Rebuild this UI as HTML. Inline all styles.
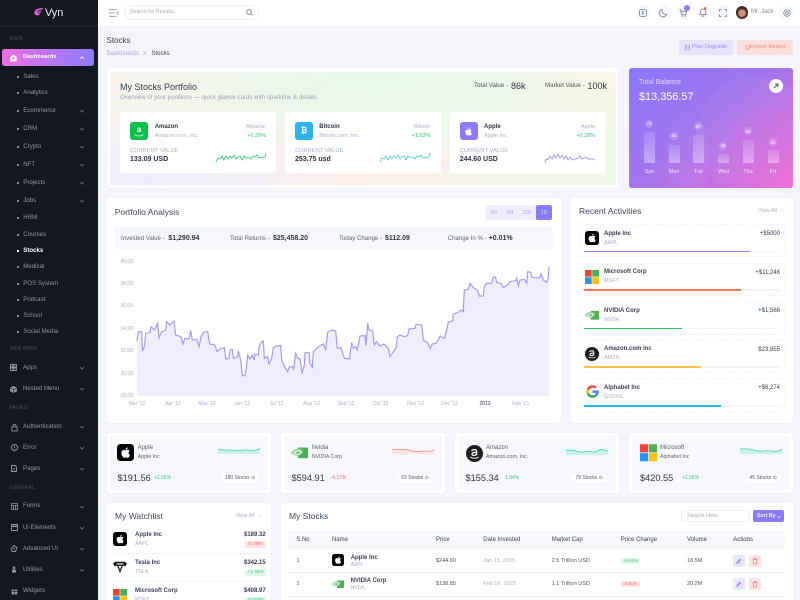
<!DOCTYPE html>
<html lang="en"><head><meta charset="utf-8"><title>Vyn Stocks</title>
<style>
*{box-sizing:border-box;margin:0;padding:0}
html,body{width:800px;height:600px;overflow:hidden;background:#f4f5fa;font-family:"Liberation Sans",sans-serif}
#r{position:relative;width:800px;height:600px;overflow:hidden}
.b{position:absolute}
.t{position:absolute;white-space:nowrap;line-height:10px;height:10px;font-size:6px;color:#3a4152;margin-top:.8px}
.r{text-align:right}
.c{text-align:center}
.card{position:absolute;background:#fff;border-radius:3px;box-shadow:0 0 2px rgba(80,90,130,.05)}
.s{color:#9299a5;font-size:6.1px}
.h{color:#4d525c;font-size:5px;letter-spacing:.2px}
.g{color:#34c77b}
.m{color:#a9afc4}
.d{color:#2b3140}
.ti{font-size:8.5px;color:#3f4656}
.p{font-size:9.2px;color:#2f3542}
.bar{position:absolute;background:linear-gradient(rgba(255,255,255,.12),rgba(255,255,255,.38))}
.bub{position:absolute;width:8px;height:8px;border-radius:50%;background:rgba(255,255,255,.18)}
svg{position:absolute;overflow:visible}
.lg{position:absolute;border-radius:3px}
</style></head><body><div id="r">
<svg width="0" height="0" style="position:absolute">
<defs>
<symbol id="apple" viewBox="0 0 24 24"><rect width="24" height="24" rx="5" fill="#000"/><path d="M16.2 12.6c0-1.9 1.5-2.7 1.6-2.8-.9-1.3-2.2-1.5-2.7-1.500-1.2-.1-2.2.7-2.8.7s-1.500-.7-2.400-.7c-1.300 0-2.400.7-3.100 1.800-1.300 2.300-.3 5.600 1 7.500.6.900 1.400 1.900 2.400 1.900.9 0 1.300-.6 2.400-.6s1.500.6 2.400.6c1 0 1.700-.9 2.300-1.900.7-1.100 1-2.100 1-2.200-.1 0-2.100-.8-2.100-2.800zM14.400 7.100c.5-.6.9-1.500.8-2.400-.8 0-1.700.5-2.200 1.200-.5.6-.9 1.400-.8 2.300.9.100 1.700-.4 2.200-1.100z" fill="#fff"/></symbol>
<symbol id="ms" viewBox="0 0 24 24"><rect x="0" y="0" width="11.500" height="11.500" fill="#f44336"/><rect x="12.500" y="0" width="11.500" height="11.500" fill="#4caf50"/><rect x="0" y="12.500" width="11.500" height="11.500" fill="#2196f3"/><rect x="12.500" y="12.500" width="11.500" height="11.500" fill="#ffc107"/></symbol>
<symbol id="nv" viewBox="0 0 24 24"><path d="M10 5h14v15H10z" fill="#4caf50"/><path d="M0 12.500C3 8.500 7 6.500 11 6.500c3 0 5 2 6.500 4-1.500 2.500-4 5.500-7.500 6-4 .5-7.500-1.500-10-4z" fill="#8fd093"/><path d="M3 12.500C5 10 8 8.800 10.500 8.800c2.500 0 3.800 1.500 4.500 3-1 1.800-3 3.500-5 3.700-2.500.2-5-1-7-3z" fill="#e3f3e3"/><path d="M6 12.500c1.500-1.500 3-2 4.500-2 1.300 0 2 .7 2.500 1.500-.7 1-1.800 1.800-3 1.900-1.500.1-3-.3-4-1.400z" fill="#6dbf71"/></symbol>
<symbol id="am" viewBox="0 0 24 24"><circle cx="12" cy="12" r="12" fill="#1f1f1f"/><path d="M8 8.500c.5-1.500 2-2 3.500-2 2 0 3.500.8 3.500 3v5M15 10.500c-3-.3-6.500.2-6.500 2.500 0 2.400 4.500 2.300 6.500-.3" fill="none" stroke="#fff" stroke-width="1.700"/><path d="M6 17c3.500 2.300 8.500 2.300 12 0" fill="none" stroke="#fff" stroke-width="1.300"/></symbol>
<symbol id="goo" viewBox="0 0 24 24"><path d="M12 4.800c1.900 0 3.300.7 4.500 1.800l3.200-3.200C17.600 1.500 15 .5 12 .5 7.500.5 3.600 3.100 1.700 6.800l3.800 3C6.400 7 9 4.800 12 4.800z" fill="#ea4335"/><path d="M23.500 12.300c0-.8-.1-1.600-.2-2.300H12v4.500h6.500c-.3 1.500-1.100 2.700-2.400 3.500l3.700 2.900c2.200-2 3.700-5 3.700-8.600z" fill="#4285f4"/><path d="M5.500 14.200c-.2-.7-.4-1.400-.4-2.200s.1-1.500.4-2.200l-3.800-3C.9 8.400.5 10.100.5 12s.4 3.600 1.200 5.200l3.800-3z" fill="#fbbc05"/><path d="M12 23.500c3.100 0 5.700-1 7.800-2.800L16.100 18c-1 .7-2.400 1.100-4.100 1.100-3 0-5.600-2-6.500-4.900l-3.800 3c1.900 3.700 5.800 6.300 10.300 6.300z" fill="#34a853"/></symbol>
<symbol id="tsla" viewBox="0 0 24 24"><path d="M0 6l4-3h16l4 3-3 5-4-1.500L12 23 7 9.500 3 11z" fill="#111"/><path d="M5 5.800h14l-3 2H8z" fill="#fff"/><path d="M9.500 10h5L12 17z" fill="#fff"/></symbol>
<symbol id="chev" viewBox="0 0 8 8"><path d="M2 3.200l2 2 2-2" fill="none" stroke="#6e737d" stroke-width=".8"/></symbol>
</defs>
</svg>

<!-- SIDEBAR -->
<div class="b" style="left:0;top:0;width:98px;height:600px;background:#13171f"></div>
<div class="b" style="left:0;top:26px;width:98px;height:1px;background:#1f232c"></div>
<svg style="left:32.500px;top:7.300px" width="11" height="9.500" viewBox="0 0 14 11"><path d="M3 3.500C5 1.500 9 1 13.500.5 12 2.500 9.500 3.500 6 4 5 4.200 4 4.800 3.800 5.500 6 5 9 4.800 11.500 4.500 10.500 6 8.500 6.800 5.500 7c.5.800 2.500.9 4 .7-1 1.500-3 2.600-5 2.300C2 9.500.5 6.500 3 3.500z" fill="#ee5fe0"/></svg>
<div class="t" style="left:45px;top:7px;font-size:10.800px;line-height:11px;height:11px;color:#f1f2f5">Vyn</div>
<div class="t h" style="left:9.500px;top:33px">MAIN</div>
<div class="b" style="left:2px;top:49px;width:91.500px;height:17px;border-radius:2.500px;background:linear-gradient(100deg,#ef6fe0,#8a7cff)"></div>
<svg style="left:10px;top:53.500px" width="7" height="8" viewBox="0 0 7 8"><path d="M3.500.5L6.700 3v4.500H.3V3z" fill="#fff"/><circle cx="3.500" cy="4.300" r="1.200" fill="#e07ae6"/></svg>
<div class="t" style="left:23px;top:51.500px;color:#fff;font-weight:700;font-size:5.800px">Dashboards</div>
<svg style="left:78px;top:53.500px" width="8" height="8" viewBox="0 0 8 8"><path d="M2 4.800L4 2.800 6 4.800" fill="none" stroke="#fff" stroke-width=".8"/></svg>

<div class="b" style="left:17px;top:75.500px;width:2px;height:2px;background:#8c919b"></div><div class="t s" style="left:23.300px;top:71px">Sales</div>
<div class="b" style="left:17px;top:92px;width:2px;height:2px;background:#8c919b"></div><div class="t s" style="left:23.300px;top:87.500px">Analytics</div>
<div class="b" style="left:17px;top:110px;width:2px;height:2px;background:#8c919b"></div><div class="t s" style="left:23.300px;top:105.500px">Ecommerce</div><svg style="left:78px;top:107px" width="8" height="8"><use href="#chev"/></svg>
<div class="b" style="left:17px;top:128px;width:2px;height:2px;background:#8c919b"></div><div class="t s" style="left:23.300px;top:123.500px">CRM</div><svg style="left:78px;top:125px" width="8" height="8"><use href="#chev"/></svg>
<div class="b" style="left:17px;top:145.500px;width:2px;height:2px;background:#8c919b"></div><div class="t s" style="left:23.300px;top:141px">Crypto</div><svg style="left:78px;top:142.500px" width="8" height="8"><use href="#chev"/></svg>
<div class="b" style="left:17px;top:163.500px;width:2px;height:2px;background:#8c919b"></div><div class="t s" style="left:23.300px;top:159px">NFT</div><svg style="left:78px;top:160.500px" width="8" height="8"><use href="#chev"/></svg>
<div class="b" style="left:17px;top:181.500px;width:2px;height:2px;background:#8c919b"></div><div class="t s" style="left:23.300px;top:177px">Projects</div><svg style="left:78px;top:178.500px" width="8" height="8"><use href="#chev"/></svg>
<div class="b" style="left:17px;top:199.500px;width:2px;height:2px;background:#8c919b"></div><div class="t s" style="left:23.300px;top:195px">Jobs</div><svg style="left:78px;top:196.500px" width="8" height="8"><use href="#chev"/></svg>
<div class="b" style="left:17px;top:217px;width:2px;height:2px;background:#8c919b"></div><div class="t s" style="left:23.300px;top:212.500px">HRM</div>
<div class="b" style="left:17px;top:233.500px;width:2px;height:2px;background:#8c919b"></div><div class="t s" style="left:23.300px;top:229px">Courses</div>
<div class="b" style="left:17px;top:249.500px;width:2px;height:2px;background:#fff"></div><div class="t s" style="left:23.300px;top:245px;color:#fff;font-weight:700">Stocks</div>
<div class="b" style="left:17px;top:266px;width:2px;height:2px;background:#8c919b"></div><div class="t s" style="left:23.300px;top:261.500px">Medical</div>
<div class="b" style="left:17px;top:282.500px;width:2px;height:2px;background:#8c919b"></div><div class="t s" style="left:23.300px;top:278px">POS System</div>
<div class="b" style="left:17px;top:298.500px;width:2px;height:2px;background:#8c919b"></div><div class="t s" style="left:23.300px;top:294px">Podcast</div>
<div class="b" style="left:17px;top:315px;width:2px;height:2px;background:#8c919b"></div><div class="t s" style="left:23.300px;top:310px">School</div>
<div class="b" style="left:17px;top:331px;width:2px;height:2px;background:#8c919b"></div><div class="t s" style="left:23.300px;top:326.500px">Social Media</div>

<div class="t h" style="left:9.500px;top:343px">WEB APPS</div>
<svg style="left:10px;top:364px" width="7" height="7" viewBox="0 0 7 7"><path d="M.5.500h2.500v2.500H.5zM4 .5h2.500v2.500H4zM.5 4h2.500v2.500H.5zM4 4h2.500v2.500H4z" fill="none" stroke="#8f949e" stroke-width=".9"/></svg>
<div class="t s" style="left:23px;top:362px">Apps</div><svg style="left:78px;top:364px" width="8" height="8"><use href="#chev"/></svg>
<svg style="left:10px;top:385.500px" width="7" height="7" viewBox="0 0 7 7"><path d="M3.500 0L7 1.800v3.400L3.500 7 0 5.200V1.800z" fill="#9298a2"/><path d="M0 2l3.500 1.800L7 2M3.500 3.800V7" stroke="#13171f" stroke-width=".6" fill="none"/></svg>
<div class="t s" style="left:23px;top:383.500px">Nested Menu</div><svg style="left:78px;top:385px" width="8" height="8"><use href="#chev"/></svg>

<div class="t h" style="left:9.500px;top:402.500px">PAGES</div>
<svg style="left:10.500px;top:423.500px" width="7" height="7.500" viewBox="0 0 7 8"><rect x=".7" y="3" width="5.600" height="4.500" fill="none" stroke="#9298a2" stroke-width=".9"/><path d="M2 3V1.800a1.500 1.500 0 013 0V3" fill="none" stroke="#9298a2" stroke-width=".9"/></svg>
<div class="t s" style="left:23px;top:421.500px">Authentication</div><svg style="left:78px;top:423px" width="8" height="8"><use href="#chev"/></svg>
<svg style="left:10.500px;top:444px" width="7" height="7" viewBox="0 0 7 7"><circle cx="3.500" cy="3.500" r="3" fill="none" stroke="#9298a2" stroke-width=".9"/><path d="M3.500 1.800v2.200M3.500 4.700v.6" stroke="#9298a2" stroke-width=".8"/></svg>
<div class="t s" style="left:23px;top:442px">Error</div><svg style="left:78px;top:444px" width="8" height="8"><use href="#chev"/></svg>
<svg style="left:11px;top:465px" width="6" height="7" viewBox="0 0 6 7"><path d="M.5.500h3.500L5.500 2v4.500h-5z" fill="none" stroke="#9298a2" stroke-width=".9"/><path d="M1.700 3.500h2.500M1.700 5h2.500" stroke="#9298a2" stroke-width=".6"/></svg>
<div class="t s" style="left:23px;top:463px">Pages</div><svg style="left:78px;top:465px" width="8" height="8"><use href="#chev"/></svg>

<div class="t h" style="left:9.500px;top:482.500px">GENERAL</div>
<svg style="left:10.500px;top:502.500px" width="7" height="7" viewBox="0 0 7 7"><path d="M.5.500h6v6h-6zM.5 2.500h6M2.500 2.500v4M4.500 2.500v4" fill="none" stroke="#9298a2" stroke-width=".8"/></svg>
<div class="t s" style="left:23px;top:500.500px">Forms</div><svg style="left:78px;top:502.500px" width="8" height="8"><use href="#chev"/></svg>
<svg style="left:10.500px;top:524px" width="7" height="7" viewBox="0 0 7 7"><path d="M.5.500h6v6h-6z" fill="none" stroke="#9298a2" stroke-width=".9"/><path d="M.5 2.300h6" stroke="#9298a2" stroke-width="1.400"/></svg>
<div class="t s" style="left:23px;top:522px">Ui Elements</div><svg style="left:78px;top:524px" width="8" height="8"><use href="#chev"/></svg>
<svg style="left:10.500px;top:545px" width="7" height="7" viewBox="0 0 7 7"><path d="M3 .5l3 2-1.500 4H1L.5 3.500z" fill="none" stroke="#9298a2" stroke-width=".9"/><circle cx="3.200" cy="3.500" r=".9" fill="#9298a2"/></svg>
<div class="t s" style="left:23px;top:543px">Advanced UI</div><svg style="left:78px;top:545px" width="8" height="8"><use href="#chev"/></svg>
<svg style="left:11px;top:566px" width="6" height="7" viewBox="0 0 6 7"><circle cx="3" cy="1.700" r="1.300" fill="#9298a2"/><rect x="1" y="3.500" width="4" height="3.300" rx="1" fill="#9298a2"/></svg>
<div class="t s" style="left:23px;top:564px">Utilities</div><svg style="left:78px;top:566px" width="8" height="8"><use href="#chev"/></svg>
<svg style="left:10.500px;top:587.500px" width="7" height="7" viewBox="0 0 7 7"><rect x=".5" y="1.500" width="6" height="5" rx="1" fill="#9298a2"/><path d="M.5 3.700h6M3.500 1v6" stroke="#13171f" stroke-width=".6"/></svg>
<div class="t s" style="left:23px;top:585.500px">Widgets</div>

<!-- HEADER -->
<div class="b" style="left:98px;top:0;width:702px;height:26px;background:#fff"></div>
<svg style="left:109px;top:8.500px" width="10" height="8" viewBox="0 0 10 8"><path d="M0 .7h7.500M0 4h5.500M0 7.300h7.500M9.500 2L7.800 4l1.700 2" fill="none" stroke="#8a8f9b" stroke-width=".8"/></svg>
<div class="b" style="left:124px;top:4.500px;width:134.500px;height:15px;border:.7px solid #eceef3;border-radius:8px"></div>
<div class="t" style="left:130px;top:6.500px;color:#a8adb8;font-size:5.300px">Search for Results...</div>
<svg style="left:246px;top:9px" width="7" height="7" viewBox="0 0 7 7"><circle cx="3" cy="3" r="2.300" fill="none" stroke="#6c7280" stroke-width=".8"/><path d="M4.800 4.800L6.500 6.500" stroke="#6c7280" stroke-width=".8"/></svg>

<div class="b" style="left:635.500px;top:5px;width:15px;height:15px;border-radius:50%;background:#f7f8fb"></div>
<svg style="left:639px;top:8.500px" width="8" height="8" viewBox="0 0 8 8"><rect x=".5" y=".5" width="7" height="7" rx="2" fill="none" stroke="#747a8a" stroke-width=".8"/><path d="M5 2.500H3.400L3 4.200h1.500L3.500 6" fill="none" stroke="#747a8a" stroke-width=".7"/></svg>
<div class="b" style="left:655.500px;top:5px;width:15px;height:15px;border-radius:50%;background:#f7f8fb"></div>
<svg style="left:659px;top:8.500px" width="8" height="8" viewBox="0 0 8 8"><path d="M3 .5a3.700 3.700 0 104.500 4.700A4 4 0 013 .5z" fill="none" stroke="#747a8a" stroke-width=".8"/></svg>
<div class="b" style="left:675.500px;top:5px;width:15px;height:15px;border-radius:50%;background:#f7f8fb"></div>
<svg style="left:679px;top:8.500px" width="8" height="8" viewBox="0 0 8 8"><path d="M.3.800h1.300l1 5h4L7.500 2.300H2" fill="none" stroke="#747a8a" stroke-width=".8"/><circle cx="3" cy="7.200" r=".6" fill="#747a8a"/><circle cx="6" cy="7.200" r=".6" fill="#747a8a"/></svg>
<div class="b" style="left:684px;top:5px;width:6px;height:6px;border-radius:50%;background:#8a7bfb"></div>
<div class="b" style="left:695.500px;top:5px;width:15px;height:15px;border-radius:50%;background:#f7f8fb"></div>
<svg style="left:699px;top:8px" width="8" height="8.500" viewBox="0 0 8 9"><path d="M4 1a2.500 2.500 0 00-2.500 2.500c0 2.300-1 3-1 3.300h7c0-.3-1-1-1-3.300A2.500 2.500 0 004 1zM3 7.800a1 1 0 002 0" fill="none" stroke="#747a8a" stroke-width=".8"/></svg>
<div class="b" style="left:703.500px;top:7px;width:2.500px;height:2.500px;border-radius:50%;background:#f2604c"></div>
<div class="b" style="left:715.500px;top:5px;width:15px;height:15px;border-radius:50%;background:#f7f8fb"></div>
<svg style="left:719px;top:8.500px" width="8" height="8" viewBox="0 0 8 8"><path d="M.5 2.500V.5h2M5.500.5h2v2M7.500 5.500v2h-2M2.500 7.500h-2v-2" fill="none" stroke="#747a8a" stroke-width=".8"/></svg>
<div class="b" style="left:735.500px;top:6px;width:12.500px;height:12.500px;border-radius:50%;background:radial-gradient(circle at 50% 55%,#c69378 0 32%,#3d2519 52%,#6e4d42 100%)"></div>
<div class="t" style="left:751px;top:6.500px;font-size:6px;color:#7a8090">Mr. Jack</div>
<div class="b" style="left:779px;top:5px;width:15px;height:15px;border-radius:50%;background:#f7f8fb"></div>
<svg style="left:782.500px;top:8.500px" width="8" height="8" viewBox="0 0 8 8"><circle cx="4" cy="4" r="1.300" fill="none" stroke="#747a8a" stroke-width=".8"/><circle cx="4" cy="4" r="3.300" fill="none" stroke="#747a8a" stroke-width=".9" stroke-dasharray="1.800 .5"/></svg>

<!-- TITLE -->
<div class="t" style="left:106.500px;top:35.500px;font-size:8px;color:#3c4250">Stocks</div>
<div class="t" style="left:106.500px;top:48px;font-size:6px;color:#a99ffb">Dashboards</div>
<div class="t" style="left:143px;top:48px;font-size:6px;color:#9aa0ac">&gt;</div>
<div class="t" style="left:151.500px;top:48px;font-size:6px;color:#3c4250">Stocks</div>
<div class="b" style="left:679px;top:40px;width:53.500px;height:15px;background:#e6e4fd;border-radius:2px"></div>
<svg style="left:685px;top:44.500px" width="5" height="5" viewBox="0 0 5 5"><rect x=".3" y=".3" width="4.400" height="4.400" fill="none" stroke="#9b8dfc" stroke-width=".6"/><path d="M.3 3.500l1.500-1.200 1 .8 1.900-1.300" fill="none" stroke="#9b8dfc" stroke-width=".5"/></svg>
<div class="t" style="left:691.500px;top:41.700px;font-size:5.800px;color:#9b8dfc">Plan Upgrade</div>
<div class="b" style="left:737.300px;top:40px;width:55.700px;height:15px;background:#fbe0dd;border-radius:2px"></div>
<svg style="left:744.500px;top:44.800px" width="5" height="5" viewBox="0 0 5 5"><circle cx="2.500" cy="2.500" r="2.100" fill="none" stroke="#f58a78" stroke-width=".6"/><path d="M1.300 2.500L2.500 3.600 3.700 2.500" fill="none" stroke="#f58a78" stroke-width=".5"/></svg>
<div class="t" style="left:750px;top:41.700px;font-size:5.800px;color:#f58571">Export Report</div>

<!-- PORTFOLIO -->
<div class="card" style="left:106.700px;top:68px;width:511.500px;height:120px"></div>
<div class="b" style="left:110px;top:72px;width:505.700px;height:113px;background:radial-gradient(ellipse 40% 70% at 8% 100%,#eeedfd 0%,rgba(238,237,253,0) 100%),radial-gradient(ellipse 45% 65% at 45% 100%,#fdeee9 0%,rgba(253,238,233,0) 100%),radial-gradient(ellipse 45% 70% at 50% 0%,#e5f8ea 0%,rgba(229,248,234,0) 100%),radial-gradient(ellipse 25% 60% at 100% 0%,#fbf6e6 0%,rgba(251,246,230,0) 100%),linear-gradient(100deg,#f7f4ee,#eef7ea)"></div>
<div class="t" style="left:120px;top:81.500px;font-size:9px;color:#363c4b">My Stocks Portfolio</div>
<div class="t" style="left:120px;top:92.200px;font-size:6.150px;color:#9ca2ae">Overview of your positions — quick glance cards with sparkline &amp; details</div>
<div class="t" style="left:474px;top:80.500px;font-size:6.200px;color:#4d5361">Total Value -</div>
<div class="t" style="left:511px;top:80.500px;font-size:9px;color:#2f3542">86k</div>
<div class="t" style="left:545px;top:80.500px;font-size:6.200px;color:#4d5361">Market Value -</div>
<div class="t" style="left:587.500px;top:80.500px;font-size:9px;color:#2f3542">100k</div>

<div class="b" style="left:120px;top:112.300px;width:156px;height:61px;background:#fff;border-radius:2px"></div>
<div class="lg" style="left:130px;top:122.300px;width:18px;height:18px;background:#0cc14b"></div>
<div class="t c" style="left:130px;top:124.500px;width:18px;color:#fff;font-size:8px;font-weight:700">a</div>
<svg style="left:134px;top:134px" width="10" height="3" viewBox="0 0 10 3"><path d="M.5.500c2.500 2 6.500 2 9 0" fill="none" stroke="#fff" stroke-width=".8"/></svg>
<div class="t" style="left:154.700px;top:121.500px;font-size:6px;color:#2f3542;font-weight:700">Amazon</div>
<div class="t m" style="left:154.700px;top:130px;font-size:5.500px">Amazon.com, Inc.</div>
<div class="t r m" style="left:216px;width:50px;top:121.500px;font-size:5.500px">Amazon</div>
<div class="t r g" style="left:216px;width:50px;top:130px;font-size:5.500px">+0.29%</div>
<div class="t m" style="left:130px;top:145.500px;font-size:5.800px">CURRENT VALUE</div>
<div class="t d" style="left:130px;top:154px;font-size:7px;font-weight:700">133.09 USD</div>
<svg style="left:216px;top:150px" width="50" height="15" viewBox="0 0 50 15"><polyline fill="none" stroke="#3ed07a" stroke-width=".9" points="0,12 2,8 4,9 6,6 8,10 10,6 12,9 14,6 16,8 18,5 20,9 22,7 24,6 26,10 28,6 30,8 33,7 35,9 37,6 39,7 41,5 43,8 45,7 47,8 49,7 50,3"/></svg>

<div class="b" style="left:285px;top:112.300px;width:155.700px;height:61px;background:#fff;border-radius:2px"></div>
<div class="lg" style="left:295px;top:122.300px;width:18px;height:18px;background:#2db3e8"></div>
<div class="t c" style="left:295px;top:125.500px;width:18px;color:#fff;font-size:8px;font-weight:700">₿</div>
<div class="t" style="left:319.300px;top:121.500px;font-size:6px;color:#2f3542;font-weight:700">Bitcoin</div>
<div class="t m" style="left:319.300px;top:130px;font-size:5.500px">Bitcoin.com, Inc.</div>
<div class="t r m" style="left:380px;width:50.500px;top:121.500px;font-size:5.500px">Bitcoin</div>
<div class="t r g" style="left:380px;width:50.500px;top:130px;font-size:5.500px">+1.53%</div>
<div class="t m" style="left:295px;top:145.500px;font-size:5.800px">CURRENT VALUE</div>
<div class="t d" style="left:295px;top:154px;font-size:7px;font-weight:700">253.75 usd</div>
<svg style="left:380px;top:150px" width="50" height="15" viewBox="0 0 50 15"><polyline fill="none" stroke="#63c6f2" stroke-width=".9" points="0,12 2,8 4,9 6,6 8,10 10,6 12,9 14,6 16,8 18,5 20,9 22,7 24,6 26,10 28,6 30,8 33,7 35,9 37,6 39,7 41,5 43,8 45,7 47,8 49,7 50,3"/></svg>

<div class="b" style="left:450px;top:112.300px;width:155px;height:61px;background:#fff;border-radius:2px"></div>
<div class="lg" style="left:459.500px;top:122.300px;width:18px;height:18px;background:#8a7bfb"></div>
<svg style="left:462px;top:124.500px" width="13" height="13" viewBox="0 0 24 24"><path d="M16.200 12.600c0-1.900 1.500-2.700 1.600-2.800-.9-1.300-2.200-1.500-2.700-1.500-1.200-.1-2.200.7-2.800.7s-1.500-.7-2.400-.7c-1.300 0-2.400.7-3.100 1.800-1.300 2.300-.3 5.600 1 7.500.6.900 1.400 1.900 2.400 1.900.9 0 1.300-.6 2.400-.6s1.500.6 2.400.6c1 0 1.700-.9 2.300-1.900.7-1.100 1-2.100 1-2.200-.1 0-2.100-.8-2.100-2.800zM14.400 7.100c.5-.6.9-1.500.8-2.400-.8 0-1.700.5-2.200 1.200-.5.6-.9 1.400-.8 2.300.9.100 1.700-.4 2.200-1.100z" fill="#fff"/></svg>
<div class="t" style="left:484px;top:121.500px;font-size:6px;color:#2f3542;font-weight:700">Apple</div>
<div class="t m" style="left:484px;top:130px;font-size:5.500px">Apple Inc</div>
<div class="t r m" style="left:545px;width:50px;top:121.500px;font-size:5.500px">Apple</div>
<div class="t r g" style="left:545px;width:50px;top:130px;font-size:5.500px">+0.28%</div>
<div class="t m" style="left:459.700px;top:145.500px;font-size:5.800px">CURRENT VALUE</div>
<div class="t d" style="left:459.700px;top:154.500px;font-size:7px;font-weight:700">244.60 USD</div>
<svg style="left:544.500px;top:150px" width="51" height="15" viewBox="0 0 51 15"><polyline fill="none" stroke="#a197f5" stroke-width=".9" points="0,13 1,9 3,10 5,6 7,9 9,5 11,8 13,4 15,8 17,5 19,9 21,6 23,10 25,7 27,10 30,9 33,8 35,6 37,9 39,8 41,7 43,9 46,9 48,9 50,10"/></svg>

<!-- TOTAL BALANCE -->
<div class="b" style="left:629px;top:68px;width:164px;height:120px;border-radius:3px;overflow:hidden;background:linear-gradient(140deg,#8b78fc 0%,#a275ee 45%,#c56fe2 72%,#ef6bd6 100%)">
<div class="b" style="left:67px;top:8px;width:120px;height:120px;border-radius:50%;background:rgba(255,255,255,.045)"></div>
<div class="b" style="left:38px;top:50px;width:40px;height:90px;border-radius:20px;background:rgba(255,255,255,.04)"></div>
<div class="b" style="left:100px;top:40px;width:80px;height:90px;border-radius:50%;background:rgba(240,110,210,.1)"></div>
</div>
<div class="t" style="left:639px;top:77px;font-size:7px;color:rgba(255,255,255,.72)">Total Balance</div>
<div class="t" style="left:639px;top:91.500px;font-size:10.900px;color:#fff">$13,356.57</div>
<div class="b" style="left:768.500px;top:78.500px;width:14.500px;height:14.500px;border-radius:50%;background:#fff"></div>
<svg style="left:773px;top:83px" width="6" height="6" viewBox="0 0 6 6"><path d="M1 5l3.500-3.500M2 1h3v3" fill="none" stroke="#555" stroke-width=".9"/></svg>

<div class="bar" style="left:644px;top:131.700px;width:11px;height:31.500px"></div>
<div class="bar" style="left:668.700px;top:145px;width:11px;height:18.300px"></div>
<div class="bar" style="left:693px;top:135px;width:11px;height:28.300px"></div>
<div class="bar" style="left:718px;top:154px;width:11px;height:9.300px"></div>
<div class="bar" style="left:743px;top:140px;width:11px;height:23.300px"></div>
<div class="bar" style="left:767.700px;top:150px;width:11px;height:13.300px"></div>
<div class="bub" style="left:645px;top:119.500px"></div><div class="t c" style="left:644px;width:10px;top:118.200px;font-size:4.300px;color:#fff">74</div>
<div class="bub" style="left:669.700px;top:132px"></div><div class="t c" style="left:668.700px;width:10px;top:130.700px;font-size:4.300px;color:#fff">45</div>
<div class="bub" style="left:694px;top:122.300px"></div><div class="t c" style="left:693px;width:10px;top:121px;font-size:4.300px;color:#fff">67</div>
<div class="bub" style="left:719px;top:141.700px"></div><div class="t c" style="left:718px;width:10px;top:140.400px;font-size:4.300px;color:#fff">25</div>
<div class="bub" style="left:744px;top:127.300px"></div><div class="t c" style="left:743px;width:10px;top:126px;font-size:4.300px;color:#fff">56</div>
<div class="bub" style="left:768.700px;top:138.300px"></div><div class="t c" style="left:767.700px;width:10px;top:137px;font-size:4.300px;color:#fff">32</div>
<div class="t c" style="left:639.500px;width:20px;top:166.500px;font-size:5.300px;color:#f4e9fb">Sun</div>
<div class="t c" style="left:664px;width:20px;top:166.500px;font-size:5.300px;color:#f4e9fb">Mon</div>
<div class="t c" style="left:688.500px;width:20px;top:166.500px;font-size:5.300px;color:#f4e9fb">Tue</div>
<div class="t c" style="left:713.500px;width:20px;top:166.500px;font-size:5.300px;color:#f4e9fb">Wed</div>
<div class="t c" style="left:738px;width:20px;top:166.500px;font-size:5.300px;color:#f4e9fb">Thu</div>
<div class="t c" style="left:763px;width:20px;top:166.500px;font-size:5.300px;color:#f4e9fb">Fri</div>

<!-- ANALYSIS -->
<div class="card" style="left:107px;top:198px;width:454px;height:225px"></div>
<div class="t ti" style="left:114.700px;top:206.500px">Portfolio Analysis</div>
<div class="b" style="left:485px;top:205px;width:67.300px;height:15px;background:#efeefd;border-radius:2px"></div>
<div class="b" style="left:536px;top:205px;width:16.300px;height:15px;background:#8a7bfb;border-radius:2px"></div>
<div class="t c" style="left:485px;width:17px;top:207px;font-size:5px;color:#a99ffb">1H</div>
<div class="t c" style="left:501.500px;width:17px;top:207px;font-size:5px;color:#a99ffb">6H</div>
<div class="t c" style="left:518.500px;width:17px;top:207px;font-size:5px;color:#a99ffb">12H</div>
<div class="t c" style="left:536px;width:16px;top:207px;font-size:5px;color:#e6e2ff">1D</div>
<div class="b" style="left:114px;top:227.300px;width:439px;height:22px;background:#f7f8fd;border-radius:2px"></div>
<div class="t" style="left:121px;top:233px;font-size:6.100px;color:#5c6270">Invested Value -</div>
<div class="t" style="left:168.300px;top:233px;font-size:7px;color:#2f3542;font-weight:700">$1,290.94</div>
<div class="t" style="left:230px;top:233px;font-size:6.100px;color:#5c6270">Total Returns -</div>
<div class="t" style="left:273px;top:233px;font-size:7px;color:#2f3542;font-weight:700">$25,458.20</div>
<div class="t" style="left:339px;top:233px;font-size:6.100px;color:#5c6270">Today Change -</div>
<div class="t" style="left:385px;top:233px;font-size:7px;color:#2f3542;font-weight:700">$112.09</div>
<div class="t" style="left:447.700px;top:233px;font-size:6.100px;color:#5c6270">Change In % -</div>
<div class="t" style="left:488.700px;top:233px;font-size:7px;color:#2f3542;font-weight:700">+0.01%</div>

<svg style="left:105px;top:195px" width="460" height="230" viewBox="0 0 1380 690">
<g stroke="#eef0f5" stroke-width="1.500" stroke-dasharray="3 4"><path d="M96 200H1332M96 267H1332M96 334H1332M96 401H1332M96 468H1332M96 535H1332"/></g>
<path fill="#efeefd" d="M96,603 L96,437 100,410 110,410 112,468 118,455 122,415 135,413 138,395 148,405 158,385 162,428 170,410 182,405 185,380 195,390 207,378 212,420 228,425 234,447 240,430 252,432 257,407 262,435 275,433 282,455 288,425 295,413 308,409 314,447 330,450 336,470 345,462 358,458 362,492 372,490 375,465 382,463 385,490 398,485 400,467 408,500 412,543 420,541 425,510 428,480 435,492 442,480 447,495 450,477 460,480 462,455 470,440 475,438 478,490 488,485 492,507 500,490 505,457 515,453 527,452 530,495 540,517 548,530 553,515 562,515 566,522 572,475 578,490 585,492 591,535 598,510 600,473 612,473 615,505 622,517 625,470 640,455 655,447 662,465 668,412 680,405 692,408 697,460 708,458 718,490 733,492 740,443 745,460 752,455 757,465 765,423 780,422 783,452 788,385 792,405 803,408 808,450 815,440 825,453 837,447 850,460 855,485 865,470 873,460 877,425 885,420 897,425 908,422 912,402 930,400 933,388 950,390 955,435 968,443 975,460 982,447 992,445 997,440 1005,423 1018,430 1025,405 1030,381 1043,378 1045,357 1060,352 1068,345 1075,350 1078,285 1090,283 1095,265 1105,278 1117,285 1123,303 1135,303 1138,275 1145,265 1160,265 1165,245 1172,247 1175,263 1188,265 1195,278 1210,268 1215,260 1232,257 1235,250 1240,272 1245,255 1258,253 1265,265 1268,230 1278,232 1280,245 1290,248 1305,248 1308,237 1315,255 1325,262 1330,248 1332,215 L1332,603 Z"/>
<polyline fill="none" stroke="#a298fb" stroke-width="3.500" points="96,437 100,410 110,410 112,468 118,455 122,415 135,413 138,395 148,405 158,385 162,428 170,410 182,405 185,380 195,390 207,378 212,420 228,425 234,447 240,430 252,432 257,407 262,435 275,433 282,455 288,425 295,413 308,409 314,447 330,450 336,470 345,462 358,458 362,492 372,490 375,465 382,463 385,490 398,485 400,467 408,500 412,543 420,541 425,510 428,480 435,492 442,480 447,495 450,477 460,480 462,455 470,440 475,438 478,490 488,485 492,507 500,490 505,457 515,453 527,452 530,495 540,517 548,530 553,515 562,515 566,522 572,475 578,490 585,492 591,535 598,510 600,473 612,473 615,505 622,517 625,470 640,455 655,447 662,465 668,412 680,405 692,408 697,460 708,458 718,490 733,492 740,443 745,460 752,455 757,465 765,423 780,422 783,452 788,385 792,405 803,408 808,450 815,440 825,453 837,447 850,460 855,485 865,470 873,460 877,425 885,420 897,425 908,422 912,402 930,400 933,388 950,390 955,435 968,443 975,460 982,447 992,445 997,440 1005,423 1018,430 1025,405 1030,381 1043,378 1045,357 1060,352 1068,345 1075,350 1078,285 1090,283 1095,265 1105,278 1117,285 1123,303 1135,303 1138,275 1145,265 1160,265 1165,245 1172,247 1175,263 1188,265 1195,278 1210,268 1215,260 1232,257 1235,250 1240,272 1245,255 1258,253 1265,265 1268,230 1278,232 1280,245 1290,248 1305,248 1308,237 1315,255 1325,262 1330,248 1332,215"/>
</svg>
<div class="t r m" style="left:113px;width:20px;top:256px;font-size:5px">40.00</div>
<div class="t r m" style="left:113px;width:20px;top:278.300px;font-size:5px">38.00</div>
<div class="t r m" style="left:113px;width:20px;top:300.700px;font-size:5px">36.00</div>
<div class="t r m" style="left:113px;width:20px;top:323px;font-size:5px">34.00</div>
<div class="t r m" style="left:113px;width:20px;top:345.500px;font-size:5px">32.00</div>
<div class="t r m" style="left:113px;width:20px;top:367.800px;font-size:5px">30.00</div>
<div class="t r m" style="left:113px;width:20px;top:390.300px;font-size:5px">28.00</div>
<div class="t c m" style="left:122px;width:30px;top:398.700px;font-size:5px">Mar '12</div>
<div class="t c m" style="left:158px;width:30px;top:398.700px;font-size:5px">Apr '12</div>
<div class="t c m" style="left:192px;width:30px;top:398.700px;font-size:5px">May '12</div>
<div class="t c m" style="left:227px;width:30px;top:398.700px;font-size:5px">Jun '12</div>
<div class="t c m" style="left:261.500px;width:30px;top:398.700px;font-size:5px">Jul '12</div>
<div class="t c m" style="left:296.500px;width:30px;top:398.700px;font-size:5px">Aug '12</div>
<div class="t c m" style="left:331px;width:30px;top:398.700px;font-size:5px">Sep '12</div>
<div class="t c m" style="left:365.500px;width:30px;top:398.700px;font-size:5px">Oct '12</div>
<div class="t c m" style="left:400.500px;width:30px;top:398.700px;font-size:5px">Nov '12</div>
<div class="t c m" style="left:434.500px;width:30px;top:398.700px;font-size:5px">Dec '12</div>
<div class="t c" style="left:470px;width:30px;top:398.700px;font-size:5px;color:#6f7585;font-weight:700">2013</div>
<div class="t c m" style="left:505.500px;width:30px;top:398.700px;font-size:5px">Feb '13</div>

<!-- RECENT -->
<div class="card" style="left:570.500px;top:198px;width:222.500px;height:225px"></div>
<div class="t ti" style="left:579px;top:205px">Recent Activities</div>
<div class="t r m" style="left:744px;width:40px;top:205px;font-size:5.500px">View All →</div>

<div class="b" style="left:578.500px;top:224.300px;width:206.500px;height:33px;border:.6px dashed #f3f4f8;border-radius:2px"></div>
<svg style="left:585px;top:231px" width="14" height="14"><use href="#apple"/></svg>
<div class="t" style="left:604px;top:228.200px;font-size:6px;color:#3a4152;font-weight:700">Apple Inc</div>
<div class="t m" style="left:604px;top:237.200px;font-size:5.500px">AAPL</div>
<div class="t r" style="left:740px;width:40px;top:228.500px;font-size:6px;color:#3a4152">+$5000</div>
<div class="b" style="left:584px;top:250.500px;width:196px;height:1.600px;background:#f4f5fb"></div>
<div class="b" style="left:584px;top:250.500px;width:166.300px;height:1.600px;background:#8a7bfb"></div>

<div class="b" style="left:578.500px;top:263px;width:206.500px;height:33px;border:.6px dashed #f3f4f8;border-radius:2px"></div>
<svg style="left:585px;top:269.500px" width="14" height="14"><use href="#ms"/></svg>
<div class="t" style="left:604px;top:266.700px;font-size:6px;color:#3a4152;font-weight:700">Microsoft Corp</div>
<div class="t m" style="left:604px;top:275.700px;font-size:5.500px">MSFT</div>
<div class="t r" style="left:740px;width:40px;top:267px;font-size:6px;color:#3a4152">+$11,246</div>
<div class="b" style="left:584px;top:289px;width:196px;height:1.600px;background:#f4f5fb"></div>
<div class="b" style="left:584px;top:289px;width:156.700px;height:1.600px;background:#f9775c"></div>

<div class="b" style="left:578.500px;top:301.700px;width:206.500px;height:33px;border:.6px dashed #f3f4f8;border-radius:2px"></div>
<svg style="left:585px;top:308px" width="14" height="14"><use href="#nv"/></svg>
<div class="t" style="left:604px;top:305.200px;font-size:6px;color:#3a4152;font-weight:700">NVIDIA Corp</div>
<div class="t m" style="left:604px;top:314.200px;font-size:5.500px">NVDA</div>
<div class="t r" style="left:740px;width:40px;top:305.500px;font-size:6px;color:#3a4152">+$1,566</div>
<div class="b" style="left:584px;top:327.500px;width:196px;height:1.600px;background:#f4f5fb"></div>
<div class="b" style="left:584px;top:327.500px;width:97.700px;height:1.600px;background:#22c55e"></div>

<div class="b" style="left:578.500px;top:340px;width:206.500px;height:33px;border:.6px dashed #f3f4f8;border-radius:2px"></div>
<svg style="left:585px;top:346.500px" width="14" height="14"><use href="#am"/></svg>
<div class="t" style="left:604px;top:343.700px;font-size:6px;color:#3a4152;font-weight:700">Amazon.com Inc</div>
<div class="t m" style="left:604px;top:352.700px;font-size:5.500px">AMZN</div>
<div class="t r" style="left:740px;width:40px;top:344px;font-size:6px;color:#3a4152">$23,855</div>
<div class="b" style="left:584px;top:366px;width:196px;height:1.600px;background:#f4f5fb"></div>
<div class="b" style="left:584px;top:366px;width:117px;height:1.600px;background:#fbbf4a"></div>

<div class="b" style="left:578.500px;top:378.300px;width:206.500px;height:33.400px;border:.6px dashed #f3f4f8;border-radius:2px"></div>
<svg style="left:585.500px;top:385px" width="13" height="13"><use href="#goo"/></svg>
<div class="t" style="left:604px;top:382.200px;font-size:6px;color:#3a4152;font-weight:700">Alphabet Inc</div>
<div class="t m" style="left:604px;top:391.200px;font-size:5.500px">GOOGL</div>
<div class="t r" style="left:740px;width:40px;top:382.500px;font-size:6px;color:#3a4152">+$6,274</div>
<div class="b" style="left:584px;top:405px;width:196px;height:1.600px;background:#f4f5fb"></div>
<div class="b" style="left:584px;top:405px;width:136.700px;height:1.600px;background:#25b9ea"></div>

<!-- SMALL CARDS -->
<div class="card" style="left:107px;top:433px;width:164px;height:60px"></div>
<div class="b" style="left:110px;top:436px;width:157.500px;height:54px;background:#f7f8fc"></div>
<svg style="left:117px;top:444px" width="17" height="17"><use href="#apple"/></svg>
<div class="t" style="left:137.700px;top:441.800px;font-size:6px;color:#5a6070">Apple</div>
<div class="t" style="left:137.700px;top:450.800px;font-size:5.300px;color:#5a6070">Apple Inc</div>
<svg style="left:217.500px;top:447px" width="43" height="8" viewBox="0 0 43 8"><path d="M0 2c4 1 7 1.500 11 1s7 1 11 .5 6-1 9-.5 7 1 11-1.500V7H0z" fill="#c9f3ea"/><path d="M0 2c4 1 7 1.500 11 1s7 1 11 .5 6-1 9-.5 7 1 11-1.500" fill="none" stroke="#3fd4b8" stroke-width=".8"/></svg>
<div class="t p" style="left:117.500px;top:472px">$191.56</div>
<div class="t g" style="left:154px;top:472.500px;font-size:5px">+1.55%</div>
<div class="b" style="left:221.700px;top:474px;width:36.600px;height:7.500px;background:#fff;border-radius:4px"></div>
<div class="t c" style="left:221.700px;width:36.600px;top:472.300px;font-size:5px;color:#4d5361">180 Stocks ⊙</div>

<div class="card" style="left:281px;top:433px;width:164px;height:60px"></div>
<div class="b" style="left:284px;top:436px;width:157.500px;height:54px;background:#f7f8fc"></div>
<svg style="left:291px;top:444px" width="17" height="17"><use href="#nv"/></svg>
<div class="t" style="left:311.700px;top:441.800px;font-size:6px;color:#5a6070">Nvidia</div>
<div class="t" style="left:311.700px;top:450.800px;font-size:5.300px;color:#5a6070">NVIDIA Corp</div>
<svg style="left:392px;top:447px" width="42" height="8" viewBox="0 0 42 8"><path d="M0 2c3 1 8 .5 12 .5s7 1.500 11 2 8-1 11-.5 6 .5 8-1.500V7H0z" fill="#fde2e2"/><path d="M0 2c3 1 8 .5 12 .5s7 1.500 11 2 8-1 11-.5 6 .5 8-1.500" fill="none" stroke="#f48a8a" stroke-width=".8"/></svg>
<div class="t p" style="left:291.500px;top:472px">$594.91</div>
<div class="t" style="left:330.500px;top:472.500px;font-size:5px;color:#f2645a">-4.17%</div>
<div class="b" style="left:397.500px;top:474px;width:35px;height:7.500px;background:#fff;border-radius:4px"></div>
<div class="t c" style="left:397.500px;width:35px;top:472.300px;font-size:5px;color:#4d5361">63 Stocks ⊙</div>

<div class="card" style="left:455px;top:433px;width:164px;height:60px"></div>
<div class="b" style="left:458px;top:436px;width:157.500px;height:54px;background:#f7f8fc"></div>
<svg style="left:465.500px;top:444.500px" width="17" height="17"><use href="#am"/></svg>
<div class="t" style="left:486px;top:441.800px;font-size:6px;color:#5a6070">Amazon</div>
<div class="t" style="left:486px;top:450.800px;font-size:5.300px;color:#5a6070">Amazon.com, Inc.</div>
<svg style="left:566px;top:446.500px" width="42" height="9" viewBox="0 0 42 9"><path d="M0 3c5 0 8 0 12 1.500s7-.5 11 0 6 1 9-1 5-1 10 1V8H0z" fill="#c9f3ea"/><path d="M0 3c5 0 8 0 12 1.500s7-.5 11 0 6 1 9-1 5-1 10 1" fill="none" stroke="#3fd4b8" stroke-width=".8"/></svg>
<div class="t p" style="left:465.500px;top:472px">$155.34</div>
<div class="t g" style="left:505px;top:472.500px;font-size:5px">1.84%</div>
<div class="b" style="left:571.700px;top:474px;width:35px;height:7.500px;background:#fff;border-radius:4px"></div>
<div class="t c" style="left:571.700px;width:35px;top:472.300px;font-size:5px;color:#4d5361">79 Stocks ⊙</div>

<div class="card" style="left:629px;top:433px;width:164px;height:60px"></div>
<div class="b" style="left:632px;top:436px;width:157.500px;height:54px;background:#f7f8fc"></div>
<svg style="left:639.500px;top:444px" width="17" height="17.500"><use href="#ms"/></svg>
<div class="t" style="left:660px;top:441.800px;font-size:6px;color:#5a6070">Microsoft</div>
<div class="t" style="left:660px;top:450.800px;font-size:5.300px;color:#5a6070">Alphabet Inc</div>
<svg style="left:740px;top:447px" width="42" height="8" viewBox="0 0 42 8"><path d="M0 2c4 0 8-.5 12 .5s5 2 10 1.500 6-.5 9 0 7 1 11-2V7H0z" fill="#c9f3ea"/><path d="M0 2c4 0 8-.5 12 .5s5 2 10 1.500 6-.5 9 0 7 1 11-2" fill="none" stroke="#3fd4b8" stroke-width=".8"/></svg>
<div class="t p" style="left:640px;top:472px">$420.55</div>
<div class="t g" style="left:682px;top:472.500px;font-size:5px">+1.56%</div>
<div class="b" style="left:745.700px;top:474px;width:35px;height:7.500px;background:#fff;border-radius:4px"></div>
<div class="t c" style="left:745.700px;width:35px;top:472.300px;font-size:5px;color:#4d5361">45 Stocks ⊙</div>

<!-- WATCHLIST -->
<div class="card" style="left:107px;top:503px;width:164px;height:100px"></div>
<div class="t ti" style="left:115px;top:510.200px">My Watchlist</div>
<div class="t r m" style="left:221.700px;width:40px;top:510.500px;font-size:5.500px">View All →</div>
<svg style="left:113px;top:532.300px" width="14" height="14"><use href="#apple"/></svg>
<div class="t" style="left:135px;top:529.200px;font-size:6px;color:#3a4152;font-weight:700">Apple Inc</div>
<div class="t m" style="left:135px;top:538px;font-size:5.300px">AAPL</div>
<div class="t r" style="left:225.700px;width:40px;top:529.200px;font-size:6px;color:#3a4152;font-weight:700">$189.32</div>
<div class="b" style="left:244.700px;top:540.700px;width:21px;height:7.300px;background:#fde3e3;border-radius:1px"></div>
<div class="t c" style="left:244.700px;width:21px;top:538.800px;font-size:4.800px;color:#f2645a">-0.78%</div>
<div class="b" style="left:113px;top:553.300px;width:155px;height:.6px;background:#f3f4f8"></div>
<svg style="left:113px;top:559.500px" width="14" height="14"><use href="#tsla"/></svg>
<div class="t" style="left:135px;top:557.200px;font-size:6px;color:#3a4152;font-weight:700">Tesla Inc</div>
<div class="t m" style="left:135px;top:566px;font-size:5.300px">TSLA</div>
<div class="t r" style="left:225.700px;width:40px;top:557.200px;font-size:6px;color:#3a4152;font-weight:700">$342.15</div>
<div class="b" style="left:245.300px;top:568.700px;width:20.400px;height:7.300px;background:#dff7e8;border-radius:1px"></div>
<div class="t c" style="left:245.300px;width:20.400px;top:566.800px;font-size:4.800px;color:#34c77b">+1.45%</div>
<div class="b" style="left:113px;top:581.300px;width:155px;height:.6px;background:#f3f4f8"></div>
<svg style="left:113px;top:589px" width="14" height="14"><use href="#ms"/></svg>
<div class="t" style="left:135px;top:585.500px;font-size:6px;color:#3a4152;font-weight:700">Microsoft Corp</div>
<div class="t m" style="left:135px;top:594.500px;font-size:5.300px">MSFT</div>
<div class="t r" style="left:225.700px;width:40px;top:585.200px;font-size:6px;color:#3a4152;font-weight:700">$408.97</div>
<div class="b" style="left:245.300px;top:597px;width:20.400px;height:7.300px;background:#dff7e8;border-radius:1px"></div>
<div class="t c" style="left:245.300px;width:20.400px;top:595.100px;font-size:4.800px;color:#34c77b">+0.62%</div>

<!-- MY STOCKS -->
<div class="card" style="left:281px;top:503px;width:512px;height:100px"></div>
<div class="t ti" style="left:289px;top:510.500px">My Stocks</div>
<div class="b" style="left:681.300px;top:510.300px;width:68px;height:12px;border:.6px solid #eef0f5;border-radius:2px"></div>
<div class="t" style="left:687px;top:510.500px;font-size:5.500px;color:#a8adb8">Search Here</div>
<div class="b" style="left:752.700px;top:510.300px;width:31.700px;height:12px;background:#8a7bfb;border-radius:2px"></div>
<div class="t" style="left:756.700px;top:510.500px;font-size:5.300px;color:#f2f0ff;font-weight:700">Sort By</div>
<svg style="left:776.500px;top:514.500px" width="4" height="4" viewBox="0 0 4 4"><path d="M.5 1.300L2 2.800 3.500 1.300" fill="none" stroke="#fff" stroke-width=".6"/></svg>
<div class="b" style="left:288.300px;top:530px;width:497px;height:19px;background:#f7f8fc"></div>
<div class="t" style="left:296.300px;top:534.200px;font-size:6px;color:#3a4152">S.No</div>
<div class="t" style="left:332px;top:534.200px;font-size:6px;color:#3a4152">Name</div>
<div class="t" style="left:436px;top:534.200px;font-size:6px;color:#3a4152">Price</div>
<div class="t" style="left:483.300px;top:534.200px;font-size:6px;color:#3a4152">Date Invested</div>
<div class="t" style="left:551.700px;top:534.200px;font-size:6px;color:#3a4152">Market Cap</div>
<div class="t" style="left:620.700px;top:534.200px;font-size:6px;color:#3a4152">Price Change</div>
<div class="t" style="left:687px;top:534.200px;font-size:6px;color:#3a4152">Volume</div>
<div class="t" style="left:733.300px;top:534.200px;font-size:6px;color:#3a4152">Actions</div>

<div class="t" style="left:296.500px;top:555px;font-size:5.500px;color:#4d5361">1</div>
<svg style="left:332px;top:554.300px" width="12" height="12"><use href="#apple"/></svg>
<div class="t" style="left:350.700px;top:552.200px;font-size:6px;color:#3a4152;font-weight:700">Apple Inc</div>
<div class="t m" style="left:350.700px;top:559.300px;font-size:5px">AAPL</div>
<div class="t" style="left:436px;top:555px;font-size:5.500px;color:#4d5361">$244.60</div>
<div class="t m" style="left:483.300px;top:555px;font-size:5.500px">Jan 15, 2025</div>
<div class="t" style="left:551.700px;top:555px;font-size:5.500px;color:#4d5361">2.5 Trillion USD</div>
<div class="b" style="left:620.700px;top:557.700px;width:19px;height:6.700px;background:#dff7e8;border-radius:1px"></div>
<div class="t c" style="left:620.700px;width:19px;top:555.400px;font-size:4.300px;color:#34c77b">+3.51%</div>
<div class="t" style="left:687px;top:555px;font-size:5.500px;color:#4d5361">18.5M</div>
<div class="b" style="left:733.300px;top:555.300px;width:11.700px;height:11.700px;background:#e9e6fe;border-radius:1.500px"></div>
<svg style="left:736.300px;top:558.300px" width="6" height="6" viewBox="0 0 6 6"><path d="M.5 5.500l.4-1.600L4 .8l1.200 1.200-3.100 3.100zM0 5.900h6" fill="#9b8dfc" stroke="#9b8dfc" stroke-width=".3"/></svg>
<div class="b" style="left:749px;top:555.300px;width:11.700px;height:11.700px;background:#fde3e3;border-radius:1.500px"></div>
<svg style="left:752px;top:558px" width="6" height="6.500" viewBox="0 0 6 7"><path d="M.5 1.500h5M2 1.500V.5h2v1M1 1.500l.4 5h3.200l.4-5z" fill="none" stroke="#f2746a" stroke-width=".7"/></svg>
<div class="b" style="left:288.300px;top:572.300px;width:497px;height:.6px;background:#f1f2f6"></div>

<div class="t" style="left:296.500px;top:578.500px;font-size:5.500px;color:#4d5361">2</div>
<svg style="left:332px;top:578px" width="12" height="12"><use href="#nv"/></svg>
<div class="t" style="left:350.700px;top:575.200px;font-size:6px;color:#3a4152;font-weight:700">NVIDIA Corp</div>
<div class="t m" style="left:350.700px;top:582.300px;font-size:5px">NVDA</div>
<div class="t" style="left:436px;top:578.500px;font-size:5.500px;color:#4d5361">$138.85</div>
<div class="t m" style="left:483.300px;top:578.500px;font-size:5.500px">Feb 10, 2025</div>
<div class="t" style="left:551.700px;top:578.500px;font-size:5.500px;color:#4d5361">1.1 Trillion USD</div>
<div class="b" style="left:620.700px;top:580.700px;width:19px;height:6.700px;background:#fde3e3;border-radius:1px"></div>
<div class="t c" style="left:620.700px;width:19px;top:578.400px;font-size:4.300px;color:#f2645a">-3.51%</div>
<div class="t" style="left:687px;top:578.500px;font-size:5.500px;color:#4d5361">20.2M</div>
<div class="b" style="left:733.300px;top:578.300px;width:11.700px;height:11.700px;background:#e9e6fe;border-radius:1.500px"></div>
<svg style="left:736.300px;top:581.300px" width="6" height="6" viewBox="0 0 6 6"><path d="M.5 5.500l.4-1.600L4 .8l1.200 1.200-3.100 3.100zM0 5.900h6" fill="#9b8dfc" stroke="#9b8dfc" stroke-width=".3"/></svg>
<div class="b" style="left:749px;top:578.300px;width:11.700px;height:11.700px;background:#fde3e3;border-radius:1.500px"></div>
<svg style="left:752px;top:581px" width="6" height="6.500" viewBox="0 0 6 7"><path d="M.5 1.500h5M2 1.500V.5h2v1M1 1.500l.4 5h3.200l.4-5z" fill="none" stroke="#f2746a" stroke-width=".7"/></svg>
<div class="b" style="left:288.300px;top:595.500px;width:497px;height:.6px;background:#f1f2f6"></div>
</div></body></html>
